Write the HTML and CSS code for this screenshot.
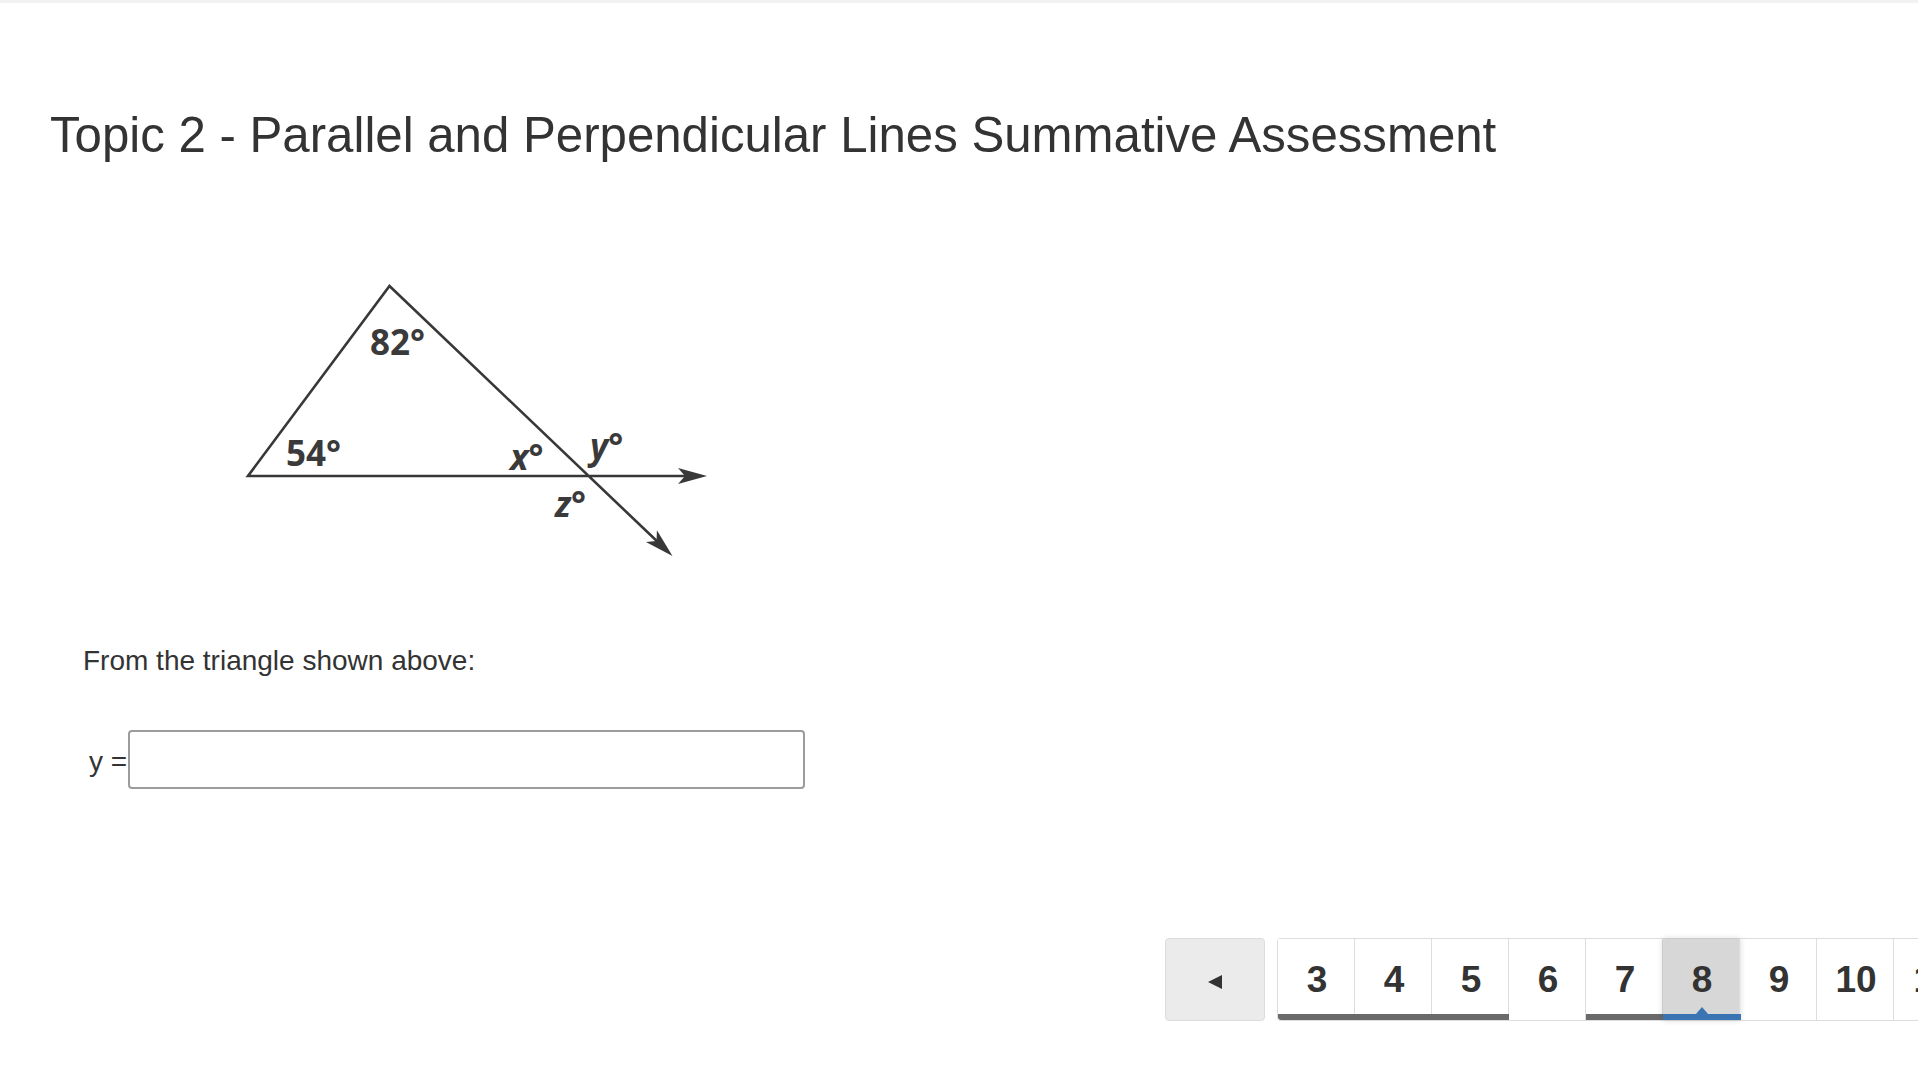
FILE: index.html
```html
<!DOCTYPE html>
<html lang="en">
<head>
<meta charset="utf-8">
<title>Topic 2 - Parallel and Perpendicular Lines Summative Assessment</title>
<link rel="stylesheet" href="styles.css">
</head>
<body>
<div class="topbar"></div>
<main class="page">
  <h1 class="title">Topic 2 - Parallel and Perpendicular Lines Summative Assessment</h1>

  <div class="figure">
    <svg class="diagram" width="480" height="295" viewBox="240 275 480 295" xmlns="http://www.w3.org/2000/svg">
      <g fill="none" stroke="#383838" stroke-width="2.6" stroke-linejoin="miter">
        <path d="M700,476 L248,476 L389.5,286 L666,549.8"/>
      </g>
      <path fill="#383838" d="M0,0 L-29,-8 L-22,0 L-29,8 Z" transform="translate(707,476)"/>
      <path fill="#383838" d="M0,0 L-29,-8 L-22,0 L-29,8 Z" transform="translate(672.5,556) rotate(43.4)"/>
      <g class="lbl">
        <text x="370" y="355">82°</text>
        <text x="286" y="466">54°</text>
        <text class="it" x="510" y="470">x°</text>
        <text class="it" x="590" y="459">y°</text>
        <text class="it" x="555" y="517">z°</text>
      </g>
    </svg>
  </div>

  <p class="prompt">From the triangle shown above:</p>

  <div class="answer">
    <label class="answer-label" for="ans">y =</label>
    <input class="answer-input" id="ans" type="text">
  </div>

  <nav class="pager">
    <button class="pager-prev" type="button"><span class="prev-arrow"></span></button>
    <ol class="pager-list">
      <li class="pg done"><span class="pg-num">3</span><span class="pg-bar"></span></li>
      <li class="pg done"><span class="pg-num">4</span><span class="pg-bar"></span></li>
      <li class="pg done"><span class="pg-num">5</span><span class="pg-bar"></span></li>
      <li class="pg"><span class="pg-num">6</span><span class="pg-bar"></span></li>
      <li class="pg done"><span class="pg-num">7</span><span class="pg-bar"></span></li>
      <li class="pg current"><span class="pg-num">8</span><span class="pg-bar"></span></li>
      <li class="pg"><span class="pg-num">9</span><span class="pg-bar"></span></li>
      <li class="pg"><span class="pg-num">10</span><span class="pg-bar"></span></li>
      <li class="pg"><span class="pg-num">11</span><span class="pg-bar"></span></li>
    </ol>
  </nav>
</main>
</body>
</html>
```

FILE: styles.css
```css
html, body {
  margin: 0;
  padding: 0;
  background: #ffffff;
  overflow: hidden;
  width: 1918px;
  height: 1084px;
}

body {
  font-family: "Liberation Sans", Arial, Helvetica, sans-serif;
  color: #333333;
}

.topbar {
  height: 3px;
  background: #f2f2f2;
}

.page {
  padding-left: 50px;
}

.title {
  margin: 104px 0 0 0;
  font-size: 49.2px;
  line-height: 56px;
  font-weight: 400;
  color: #333333;
  white-space: nowrap;
}

.figure {
  margin: 112px 0 0 190px;
  width: 480px;
  height: 295px;
}

.diagram {
  display: block;
}

.lbl text {
  font-family: "Open Sans", "Noto Sans", sans-serif;
  font-weight: 700;
  font-size: 35px;
  fill: #3a3a3a;
}

.lbl .it {
  font-style: italic;
}

.prompt {
  margin: 75px 0 0 33px;
  font-size: 28px;
  line-height: 32px;
  color: #333333;
}

.answer {
  margin: 53px 0 0 39px;
  display: flex;
  align-items: center;
}

.answer-label {
  font-size: 28px;
  line-height: 32px;
  padding-top: 4px;
  color: #333333;
}

.answer-input {
  box-sizing: border-box;
  width: 677px;
  height: 59px;
  margin: 0 0 0 1px;
  border: 2px solid #9c9c9c;
  border-radius: 4px;
  background: #ffffff;
  font-size: 24px;
  padding: 0 10px;
}

.pager {
  margin: 149px 0 0 1115px;
  display: flex;
  align-items: flex-start;
  gap: 12px;
  width: 900px;
}

.pager-prev {
  flex: none;
  box-sizing: border-box;
  width: 100px;
  height: 83px;
  padding: 0;
  margin: 0;
  background: #ebebeb;
  border: 1px solid #dcdcdc;
  border-radius: 4px;
  display: flex;
  align-items: center;
  justify-content: center;
}

.prev-arrow {
  display: block;
  width: 0;
  height: 0;
  margin-top: 5px;
  border-top: 7px solid transparent;
  border-bottom: 7px solid transparent;
  border-right: 14px solid #333333;
}

.pager-list {
  list-style: none;
  margin: 0;
  padding: 0;
  display: flex;
  flex: none;
  border: 1px solid #dddddd;
  border-right: none;
  border-radius: 4px 0 0 4px;
}

.pg {
  position: relative;
  flex: none;
  box-sizing: border-box;
  width: 77px;
  height: 81px;
  border-right: 1px solid #dddddd;
  display: flex;
  flex-direction: column;
  background: #ffffff;
}

.pg-num {
  flex: 1;
  display: flex;
  align-items: center;
  justify-content: center;
  padding: 7px 0 0 2px;
  font-size: 37px;
  font-weight: 700;
  color: #333333;
}

.pg-bar {
  position: relative;
  height: 6px;
  margin-right: -1px;
}

.pg.done .pg-bar {
  background: #6a6a6a;
}

.pg:nth-child(3) .pg-bar {
  margin-right: -4px;
}

.pg:first-child .pg-bar {
  border-bottom-left-radius: 3px;
}

.pg.current {
  background: #d7d7d7;
  box-shadow: 0 0 6px rgba(0, 0, 0, 0.18);
  z-index: 1;
}

.pg.current .pg-bar {
  background: #3a74b3;
  margin-right: -2px;
}

.pg.current .pg-bar::before {
  content: "";
  position: absolute;
  left: 50%;
  bottom: 100%;
  margin-left: -6px;
  width: 0;
  height: 0;
  border-left: 6px solid transparent;
  border-right: 6px solid transparent;
  border-bottom: 7px solid #3a74b3;
}
```
